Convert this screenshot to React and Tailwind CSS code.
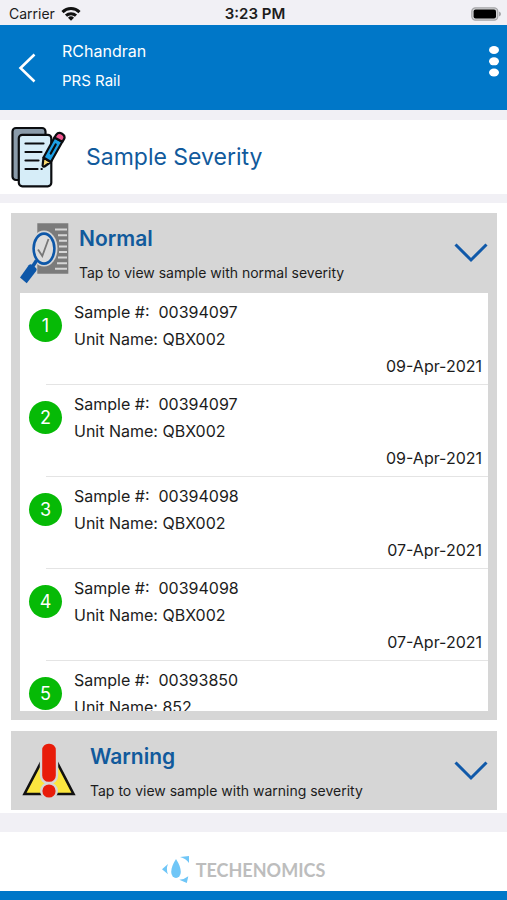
import { useState } from 'react'
import clsx from 'clsx'

const SAMPLES = [
  { id: '00394097', unit: 'QBX002', date: '09-Apr-2021' },
  { id: '00394097', unit: 'QBX002', date: '09-Apr-2021' },
  { id: '00394098', unit: 'QBX002', date: '07-Apr-2021' },
  { id: '00394098', unit: 'QBX002', date: '07-Apr-2021' },
  { id: '00393850', unit: '852' },
]

function WifiIcon() {
  return (
    <svg viewBox="0 0 20 15" className="h-4 w-5" aria-hidden>
      <g fill="none" stroke="#111" strokeWidth="3">
        <path d="M1.5 5.6a12 12 0 0 1 17 0" />
        <path d="M5 9.2a7.2 7.2 0 0 1 10 0" />
      </g>
      <path d="M10 14.2 7 11.2a4.3 4.3 0 0 1 6 0Z" fill="#111" />
    </svg>
  )
}

function BatteryIcon() {
  return (
    <svg viewBox="0 0 30 14" className="h-[14px] w-[30px]" aria-hidden>
      <rect x="0.8" y="0.8" width="26" height="12.4" rx="3.6" fill="#d4d4d6" stroke="#a5a5a8" strokeWidth="1.2" />
      <rect x="2.6" y="2.4" width="22.4" height="9.2" rx="2" fill="#000" />
      <path d="M28 4.6q2 .8 2 2.4t-2 2.4Z" fill="#a5a5a8" />
    </svg>
  )
}

function NotesIcon() {
  return (
    <svg viewBox="0 0 56 64" className="h-16 w-14 shrink-0" aria-hidden>
      <g stroke="#0b0d10" strokeWidth="2.2" strokeLinejoin="round">
        <rect x="2.5" y="3" width="33" height="52" rx="3.5" fill="#8a9baa" />
        <rect x="8.8" y="9.8" width="32.5" height="51.5" rx="3.5" fill="#d6edf8" />
        <path d="M33.5 32.6 32.6 40.5q.3 1.6 1.9 1L40.8 37Z" fill="#fbdb70" />
        <path d="M33.5 32.5 44.5 12.5l7.8 4.3L40.9 37Z" fill="#1da1e6" />
        <path d="m44.5 12.5 1.6-2.6q2.3-3.2 6-1.2 3.6 2.3 1.9 5.5l-1.7 2.6Z" fill="#f2558f" />
      </g>
      <path
        d="M15.5 18.5h18M15.5 27h16M15.5 35.5h13M15.5 44h12M31.5 44h.3M40.7 28.5l5-9"
        fill="none"
        stroke="#0b0d10"
        strokeWidth="2.2"
        strokeLinecap="round"
      />
    </svg>
  )
}

function InspectIcon() {
  return (
    <svg viewBox="0 0 50 62" className="h-[62px] w-[50px] shrink-0" aria-hidden>
      <path d="M17.3 1.3h31v50.4h-31Z" fill="#7b7b7b" />
      <path
        d="M35 7.5h12M38 13.2h9M39 18.8h8M39 24.4h8M39 30h8M38 35.6h9M37 41.2h10M35 46.8h12"
        stroke="#d6d6d6"
        strokeWidth="2"
      />
      <ellipse cx="24" cy="26.6" rx="13.5" ry="18" fill="#d6d6d6" />
      <ellipse cx="24" cy="26.6" rx="10.4" ry="15" fill="#dcdcdc" stroke="#0d57a8" strokeWidth="2.6" />
      <path d="m18 27.5 4.3 6.5 6.2-17" fill="none" stroke="#777" strokeWidth="1.8" />
      <path d="m16.5 38.5-4.5 7" stroke="#0d57a8" strokeWidth="3.5" />
      <path d="M8.7 43.3q1.6-1.7 3.3-.5l4 3.2q1.3 1.2.2 3L6.7 61.3 0 55.5Z" fill="#0d57a8" />
    </svg>
  )
}

function WarningIcon() {
  return (
    <svg viewBox="0 0 54 56" className="h-14 w-[54px] shrink-0" aria-hidden>
      <path d="M27 4 2.5 51h49Z" fill="#fbe63f" stroke="#111" strokeWidth="2.6" />
      <path d="M18.2 0h17.6v19H18.2Z" fill="#d6d6d6" />
      <g fill="#e81c0a" stroke="#d6d6d6" strokeWidth="2.4">
        <rect x="19" y="-.5" width="16" height="40.5" rx="7.5" />
        <circle cx="27" cy="48" r="7.8" />
      </g>
    </svg>
  )
}

function Logo() {
  return (
    <svg viewBox="0 0 28 28" className="h-7 w-7" aria-hidden>
      <g fill="#6fc6f7">
        <path d="M14 3q4.8 7.5 4.8 13a4.8 6 0 0 1-9.6 0Q9.2 10.5 14 3Z" />
        <path d="M6 8 0 13.2 6 18.2q-2.2-5 0-10.2Z" />
        <path d="M18 1l9-1v7q-3-4.5-9-6Z" />
        <path d="M17.3 23.8q5-.3 9-3.5l-1.5 6.7Z" />
      </g>
    </svg>
  )
}

function SampleRow({ index, sample }) {
  return (
    <li className="flex h-[92px] pl-[9px]">
      <span className="z-10 mt-4 flex size-[33px] shrink-0 items-center justify-center rounded-full bg-[#06ba06] text-lg text-white">
        {index}
      </span>
      <div className="-ml-4 flex flex-1 flex-col border-b border-[#e4e4e4] pt-1.5 pr-1.5 pl-7 text-base leading-[27px]">
        <p>Sample #:&nbsp; {sample.id}</p>
        <p>Unit Name:&nbsp;{sample.unit}</p>
        {sample.date && <p className="text-right">{sample.date}</p>}
      </div>
    </li>
  )
}

function SeverityHeader({ icon, title, hint, open, onToggle, className }) {
  return (
    <div className={clsx('flex shrink-0 items-center', className)}>
      {icon}
      <div className="flex-1 pt-1.5">
        <h2 className="text-[21px] leading-8 font-semibold text-[#115a9c]">{title}</h2>
        <p className="pt-0.5 text-sm leading-8">{hint}</p>
      </div>
      <button type="button" aria-label={`Toggle ${title}`} aria-expanded={open} onClick={onToggle}>
        <svg viewBox="0 0 34 20" className="h-5 w-[34px]" fill="none" stroke="#1059a9" strokeWidth="3">
          <path d="m1.5 1.5 15.5 15.5L32.5 1.5" />
        </svg>
      </button>
    </div>
  )
}

export default function App() {
  const [open, setOpen] = useState({ normal: true, warning: false })
  const toggle = (key) => setOpen((prev) => ({ ...prev, [key]: !prev[key] }))

  return (
    <div className="flex h-screen flex-col bg-[#f1f0f5] font-[Inter,sans-serif] text-[#1c1c1c]">
      {/* Status bar */}
      <div className="grid h-[25px] shrink-0 grid-cols-3 items-center pt-0.5 pr-1.5 pl-[9px] text-sm">
        <span className="flex items-center gap-1.5">Carrier <WifiIcon /></span>
        <span className="text-center text-[15px] font-semibold">3:23 PM</span>
        <span className="flex justify-end"><BatteryIcon /></span>
      </div>

      <header className="flex h-[85px] shrink-0 items-start bg-[#0077c8] pr-2 text-white">
        <button type="button" aria-label="Back" className="mt-7 ml-[18px]">
          <svg viewBox="0 0 18 30" className="h-[30px] w-[18px]" fill="none" stroke="currentColor" strokeWidth="2.6">
            <path d="M16.5 1.5 2.5 15l14 13.5" />
          </svg>
        </button>
        <div className="ml-[26px] flex-1 pt-2.5">
          <p className="text-base leading-8">RChandran</p>
          <p className="text-[15px] leading-7">PRS Rail</p>
        </div>
        <button type="button" aria-label="More options" className="mt-5">
          <svg viewBox="0 0 10 32" className="h-8 w-2.5" fill="currentColor">
            <ellipse cx="5" cy="5" rx="5" ry="4" />
            <ellipse cx="5" cy="16.3" rx="5" ry="4" />
            <ellipse cx="5" cy="27.5" rx="5" ry="4" />
          </svg>
        </button>
      </header>

      <div className="mt-2.5 flex h-[74px] shrink-0 items-center gap-5 bg-white pl-2.5">
        <NotesIcon />
        <h1 className="text-[23px] text-[#115a9c]">Sample Severity</h1>
      </div>

      <main className="mt-[9px] flex min-h-0 flex-1 flex-col gap-[11px] bg-white pt-2.5 pr-2.5 pb-[3px] pl-[11px]">
        <section className="flex min-h-0 flex-1 flex-col bg-[#d6d6d6] px-[9px] pb-[9px]">
          <SeverityHeader
            className="h-20 gap-[9px]"
            icon={<InspectIcon />}
            title="Normal"
            hint="Tap to view sample with normal severity"
            open={open.normal}
            onToggle={() => toggle('normal')}
          />
          {open.normal && (
            <ul className="min-h-0 flex-1 overflow-y-auto bg-white [scrollbar-width:none]">
              {SAMPLES.map((sample, i) => (
                <SampleRow key={i} index={i + 1} sample={sample} />
              ))}
            </ul>
          )}
        </section>

        <section className="shrink-0 bg-[#d6d6d6] pr-[9px] pl-[11px]">
          <SeverityHeader
            className="h-[79px] gap-3.5"
            icon={<WarningIcon />}
            title="Warning"
            hint="Tap to view sample with warning severity"
            open={open.warning}
            onToggle={() => toggle('warning')}
          />
        </section>
      </main>

      <footer className="mt-[19px] flex h-[68px] shrink-0 items-center justify-center gap-1.5 border-b-[9px] border-[#0077c8] bg-white pt-4 pr-5">
        <Logo />
        <span className="font-[Lato,sans-serif] text-lg font-bold text-[#bdbdbd]">TECHENOMICS</span>
      </footer>
    </div>
  )
}
